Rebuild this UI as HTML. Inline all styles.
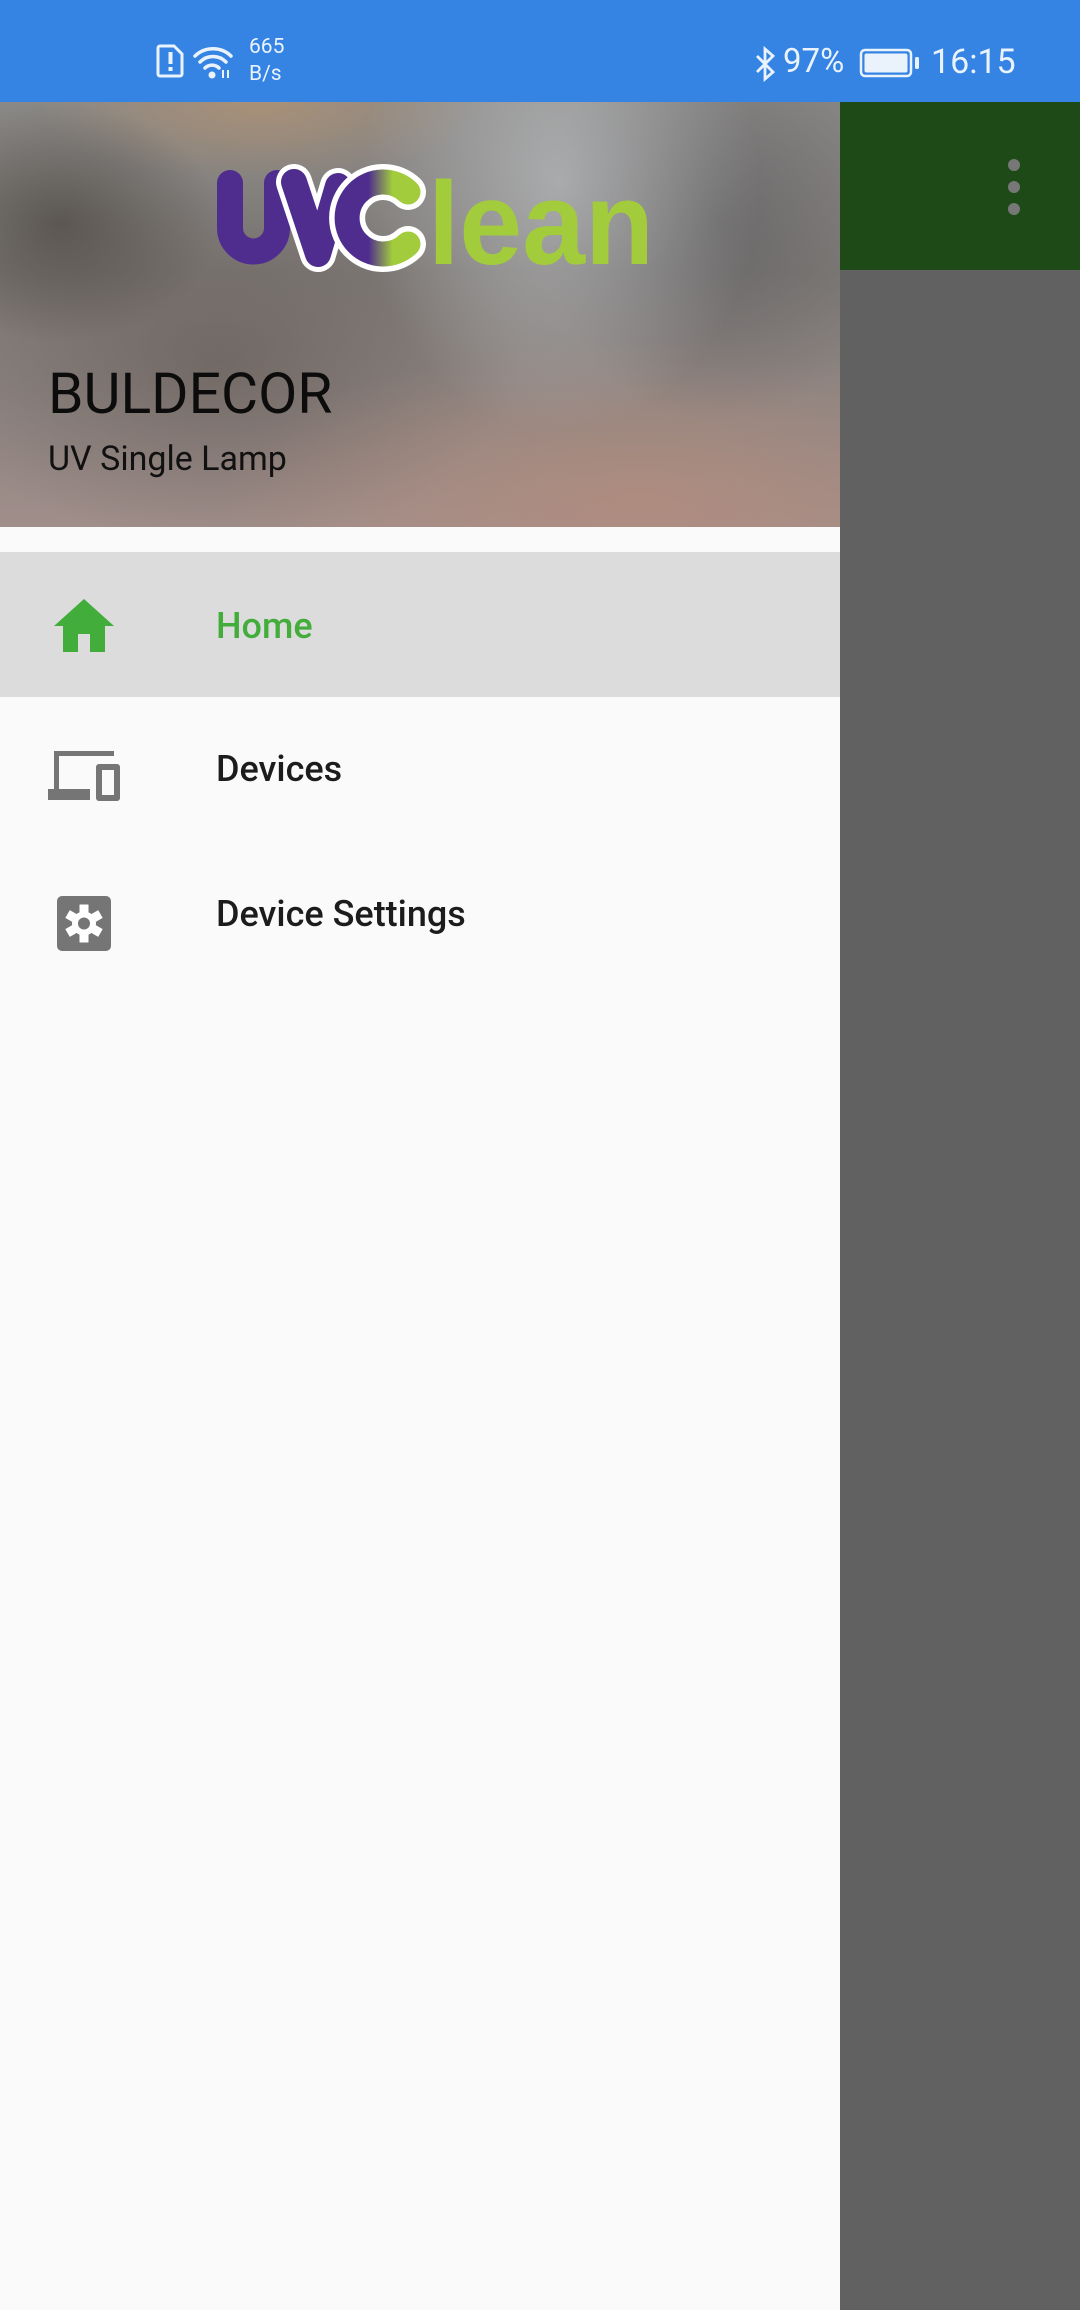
<!DOCTYPE html>
<html><head><meta charset="utf-8"><style>
*{margin:0;padding:0;box-sizing:border-box}
body{width:1080px;height:2310px;overflow:hidden;background:#616161;font-family:"Roboto","Liberation Sans",sans-serif;position:relative}
.sb{position:absolute;left:0;top:0;width:1080px;height:102px;background:#3584e3;color:#eaf2fc}
.drawer{position:absolute;left:0;top:102px;width:840px;height:2208px;background:#fafafa}
.hdr{position:absolute;left:0;top:0;width:840px;height:425px;overflow:hidden;
background:
radial-gradient(ellipse 160px 120px at 60px 120px,rgba(60,55,50,.55),transparent),
radial-gradient(ellipse 220px 80px at 260px 0px,rgba(190,150,110,.6),transparent),
radial-gradient(ellipse 200px 250px at 560px 80px,rgba(200,205,210,.55),transparent),
radial-gradient(ellipse 180px 200px at 720px 120px,rgba(80,80,85,.45),transparent),
radial-gradient(ellipse 420px 160px at 640px 400px,rgba(190,140,120,.55),transparent),
radial-gradient(ellipse 300px 180px at 220px 260px,rgba(90,80,75,.5),transparent),
linear-gradient(180deg,#8a8886 0%,#7f7b78 40%,#8e8582 70%,#a08e8a 100%)}
.t1{position:absolute;left:48px;top:263px;font-size:57px;color:#0c0c0c;line-height:1}
.t2{position:absolute;left:48px;top:340px;font-size:34px;color:#111;line-height:1}
.item{position:absolute;left:0;width:840px;height:145px}
.lbl{position:absolute;left:216px;font-size:36px;font-weight:500;line-height:1}
.green{position:absolute;left:840px;top:102px;width:240px;height:168px;background:#1d4a17}
</style></head><body>
<div class="sb">
<svg style="position:absolute;left:156px;top:44px" width="30" height="34" viewBox="0 0 30 34"><path d="M4 2h14l8 8v20a2 2 0 0 1-2 2H4a2 2 0 0 1-2-2V4a2 2 0 0 1 2-2z" fill="none" stroke="#eaf2fc" stroke-width="3"/><rect x="12.5" y="8" width="4" height="12" fill="#eaf2fc"/><rect x="12.5" y="23" width="4" height="4" fill="#eaf2fc"/></svg>
<svg style="position:absolute;left:192px;top:44px" width="44" height="36" viewBox="0 0 44 36"><path d="M3 12a26 26 0 0 1 36 0M8 18a18 18 0 0 1 26 0M13 24a10 10 0 0 1 14 0" fill="none" stroke="#eaf2fc" stroke-width="3.5" stroke-linecap="round"/><circle cx="20" cy="31" r="3.5" fill="#eaf2fc"/><path d="M31 26v8M36 26v8" stroke="#eaf2fc" stroke-width="2"/></svg>
<div style="position:absolute;left:249px;top:37px;font-size:21px;line-height:1">665</div>
<div style="position:absolute;left:249px;top:64px;font-size:21px;line-height:1">B/s</div>
<svg style="position:absolute;left:752px;top:46px" width="28" height="36" viewBox="0 0 28 36"><path d="M5 10l16 16-8 7V3l8 7L5 26" fill="none" stroke="#eaf2fc" stroke-width="2.8"/></svg>
<div style="position:absolute;left:783px;top:45px;font-size:33px;line-height:1">97%</div>
<svg style="position:absolute;left:859px;top:48px" width="64" height="30" viewBox="0 0 64 30"><rect x="2" y="2" width="50" height="26" rx="4" fill="none" stroke="#eaf2fc" stroke-width="2.5"/><rect x="5.5" y="5.5" width="43" height="19" rx="2" fill="#eaf2fc"/><rect x="56" y="9" width="4" height="12" rx="1.5" fill="#eaf2fc"/></svg>
<div style="position:absolute;left:931px;top:45px;font-size:34px;line-height:1">16:15</div>
</div>
<div class="green"><svg style="position:absolute;left:164px;top:55px" width="20" height="60" viewBox="0 0 20 60"><circle cx="10" cy="8" r="6" fill="#777"/><circle cx="10" cy="30" r="6" fill="#777"/><circle cx="10" cy="52" r="6" fill="#777"/></svg></div>
<div class="drawer">
<div class="hdr">
<svg style="position:absolute;left:0;top:0" width="840" height="200" viewBox="0 102 840 200">
<defs><linearGradient id="cg" x1="0" x2="1"><stop offset="0.35" stop-color="#4f2d8f"/><stop offset="0.75" stop-color="#a2cc3c"/></linearGradient></defs>
<path d="M230 183V228A23.5 23.5 0 0 0 277 228V183" fill="none" stroke="#4f2d8f" stroke-width="26" stroke-linecap="round"/>
<polyline points="294,182 318,254 338,186" fill="none" stroke="#fff" stroke-width="36" stroke-linecap="round" stroke-linejoin="round"/>
<polyline points="294,182 318,254 338,186" fill="none" stroke="#4f2d8f" stroke-width="26" stroke-linecap="round" stroke-linejoin="round"/>
<path d="M408 192A36 36 0 1 0 408 244" fill="none" stroke="#fff" stroke-width="36" stroke-linecap="round"/>
<path d="M408 192A36 36 0 1 0 408 244" fill="none" stroke="url(#cg)" stroke-width="25" stroke-linecap="round"/>
<text x="428" y="264" font-family="Liberation Sans" font-weight="bold" font-size="118" fill="#a2cc3c" textLength="226" lengthAdjust="spacingAndGlyphs">lean</text>
</svg>
<div class="t1">BULDECOR</div>
<div class="t2">UV Single Lamp</div>
</div>
<div class="item" style="top:450px;background:#dcdcdc">
<svg style="position:absolute;left:54px;top:47px" width="60" height="53" viewBox="0 0 60 53"><path d="M30 0L60 27H51V53H36V35H24V53H9V27H0Z" fill="#43ad3c"/></svg>
<div class="lbl" style="top:56px;color:#43ad3c">Home</div>
</div>
<div class="item" style="top:595px">
<svg style="position:absolute;left:48px;top:54px" width="72" height="50" viewBox="0 0 72 50"><path d="M11 0H66V5H11V38H42V49H0V38H6V0Z" fill="#757575"/><rect x="48" y="13" width="24" height="37" rx="3" fill="#757575"/><rect x="54" y="19" width="12" height="25" fill="#fafafa"/></svg>
<div class="lbl" style="top:54px;color:#1c1c1c">Devices</div>
</div>
<div class="item" style="top:740px">
<svg style="position:absolute;left:57px;top:54px" width="54" height="55" viewBox="0 0 54 55"><rect width="54" height="55" rx="5" fill="#757575"/><g transform="translate(27 27.5)" fill="#fff"><circle r="12"/><g id="t"><rect x="-4.5" y="-19" width="9" height="9"/></g><use href="#t" transform="rotate(60)"/><use href="#t" transform="rotate(120)"/><use href="#t" transform="rotate(180)"/><use href="#t" transform="rotate(240)"/><use href="#t" transform="rotate(300)"/><circle r="6" fill="#757575"/></g></svg>
<div class="lbl" style="top:54px;color:#1c1c1c">Device Settings</div>
</div>
</div>
</body></html>
